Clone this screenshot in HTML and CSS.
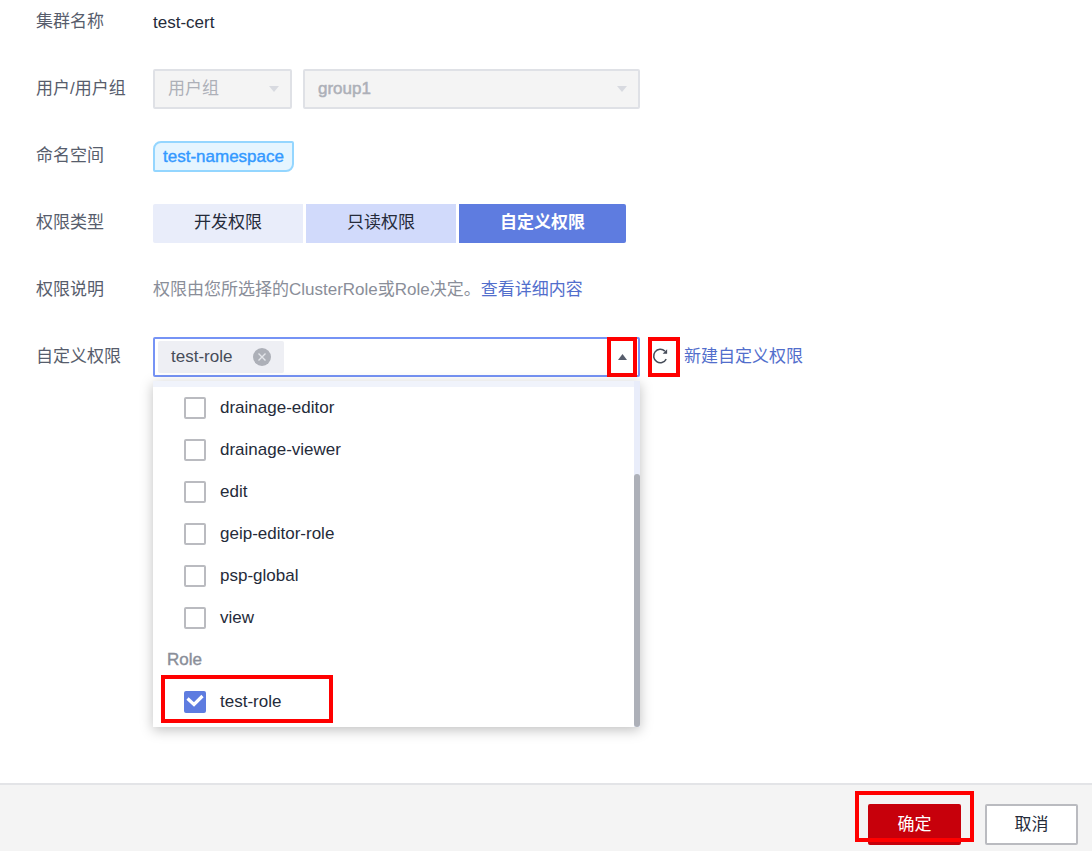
FILE: index.html
```html
<!DOCTYPE html>
<html lang="zh-CN">
<head>
    <meta charset="UTF-8">
    <meta name="viewport" content="width=device-width, initial-scale=1.0">
    <title>添加权限</title>
    <link rel="stylesheet" href="styles.css">
</head>
<body>
    <!-- Permission form -->
    <form class="form" id="permissionForm">
        <div class="form-row">
            <span class="label">集群名称</span>
            <span class="value">test-cert</span>
        </div>

        <div class="form-row">
            <label class="label" for="userType">用户/用户组</label>
            <div class="select-group">
                <div class="select select-small">
                    <select id="userType" disabled>
                        <option>用户组</option>
                    </select>
                    <svg class="select-arrow" width="10" height="6" viewBox="0 0 10 6"><path d="M0 0h10L5 6z"/></svg>
                </div>
                <div class="select select-large">
                    <select id="userGroup" class="strong" aria-label="用户组名称" disabled>
                        <option>group1</option>
                    </select>
                    <svg class="select-arrow" width="10" height="6" viewBox="0 0 10 6"><path d="M0 0h10L5 6z"/></svg>
                </div>
            </div>
        </div>

        <div class="form-row">
            <span class="label">命名空间</span>
            <span class="namespace-tag">test-namespace</span>
        </div>

        <div class="form-row">
            <span class="label">权限类型</span>
            <div class="type-buttons">
                <button type="button">开发权限</button>
                <button type="button" class="hovered">只读权限</button>
                <button type="button" class="active">自定义权限</button>
            </div>
        </div>

        <div class="form-row">
            <span class="label">权限说明</span>
            <p class="description">权限由您所选择的ClusterRole或Role决定。<a href="#">查看详细内容</a></p>
        </div>

        <div class="form-row">
            <span class="label">自定义权限</span>
            <div class="role-select">
                <div class="role-box">
                    <span class="chip">
                        test-role
                        <button type="button" class="chip-remove" aria-label="移除">
                            <svg width="18" height="18" viewBox="0 0 18 18"><circle cx="9" cy="9" r="9" fill="#adb0b8"/><path d="M5.5 5.5l7 7M12.5 5.5l-7 7" stroke="#e4e6eb" stroke-width="1.4"/></svg>
                        </button>
                    </span>
                    <button type="button" class="toggle marked" aria-label="收起">
                        <svg width="9" height="6" viewBox="0 0 9 6"><path d="M0 6h9L4.500 0z" fill="#575d6c"/></svg>
                    </button>
                </div>

                <!-- Dropdown list -->
                <div class="dropdown">
                    <div class="options">
                        <label class="option"><input type="checkbox">drainage-editor</label>
                        <label class="option"><input type="checkbox">drainage-viewer</label>
                        <label class="option"><input type="checkbox">edit</label>
                        <label class="option"><input type="checkbox">geip-editor-role</label>
                        <label class="option"><input type="checkbox">psp-global</label>
                        <label class="option"><input type="checkbox">view</label>
                        <div class="option-title">Role</div>
                        <label class="option option-marked"><input type="checkbox" checked>test-role</label>
                    </div>
                    <div class="scrollbar"><div class="thumb"></div></div>
                </div>
            </div>
            <button type="button" class="refresh marked" aria-label="刷新">
                <svg width="18" height="18" viewBox="0 0 18 18"><path d="M16 12.500A7.500 7.500 0 1 1 14.500 3.500" fill="none" stroke="#464c59" stroke-width="1.700"/><path d="M17 1.500v5h-5z" fill="#464c59"/></svg>
            </button>
            <a href="#" class="new-role">新建自定义权限</a>
        </div>
    </form>

    <!-- Footer -->
    <footer class="footer">
        <div class="confirm">
            <button type="submit" form="permissionForm" class="btn btn-primary">确定</button>
        </div>
        <button type="button" class="btn">取消</button>
    </footer>
</body>
</html>
```
FILE: styles.css
```css
*,
*::after {
    margin: 0;
    padding: 0;
    box-sizing: border-box;
}

body {
    font-family: "Liberation Sans", "Noto Sans CJK SC", sans-serif;
    font-size: 17px;
    line-height: 24px;
    color: #252b3a;
    background-color: white;
    display: flex;
    flex-direction: column;
    min-height: 100vh;
}

button,
select {
    font: inherit;
    color: inherit;
}

button {
    border: none;
    background: none;
    cursor: pointer;
}

svg {
    display: block;
}

a {
    color: #526ecc;
    text-decoration: none;
}

a:hover {
    text-decoration: underline;
}

.form {
    flex-grow: 1;
    display: flex;
    flex-direction: column;
    gap: 27px;
    padding: 2px 36px;
}

.form-row {
    display: flex;
    align-items: center;
    min-height: 40px;
}

.label {
    width: 117px;
    flex-shrink: 0;
    color: #575d6c;
}

.value {
    padding-top: 2px;
}

.select-group {
    display: flex;
    gap: 11px;
    width: 487px;
}

.select {
    display: flex;
    align-items: center;
    justify-content: flex-end;
    position: relative;
}

.select-small {
    width: 139px;
}

.select-large {
    flex-grow: 1;
}

.select select {
    appearance: none;
    width: 100%;
    height: 40px;
    padding: 0 13px;
    border: 2px solid #dfe1e6;
    border-radius: 2px;
    background-color: #f4f4f4;
    color: #adb0b8;
    opacity: 1;
}

.select .strong {
    -webkit-text-stroke: 0.5px #adb0b8;
}

.select-arrow {
    position: absolute;
    right: 13px;
    fill: #d8dae0;
    pointer-events: none;
}

.namespace-tag {
    padding: 0 8px;
    border: 2px solid #94d6ff;
    border-radius: 8px 2px;
    background-color: #e5f5ff;
    color: #3399ff;
    line-height: 27px;
    -webkit-text-stroke: 0.4px #3399ff;
}

.type-buttons {
    display: flex;
    gap: 3px;
}

.type-buttons button {
    height: 39px;
    padding: 0 41px;
    background-color: #e9edfa;
}

.type-buttons button:first-child {
    border-radius: 2px 0 0 2px;
}

.type-buttons button:last-child {
    border-radius: 0 2px 2px 0;
}

.type-buttons .hovered {
    background-color: #d1dafb;
}

.type-buttons .active {
    background-color: #5e7ce0;
    color: white;
    font-weight: bold;
}

.description {
    color: #8a8e99;
}

.role-select {
    position: relative;
    width: 487px;
}

.role-box {
    display: flex;
    align-items: center;
    justify-content: space-between;
    height: 40px;
    padding-left: 3px;
    border: 2px solid #7693f5;
    border-radius: 2px;
}

.chip {
    display: flex;
    align-items: center;
    gap: 21px;
    height: 32px;
    padding: 0 13px;
    border-radius: 2px;
    background-color: #eeeff4;
    color: #464c59;
}

.marked {
    display: flex;
    align-items: center;
    justify-content: center;
    border: 4px solid red;
}

.toggle {
    width: 30px;
    height: 40px;
    margin-right: 1px;
}

.refresh {
    width: 32px;
    height: 40px;
    margin: 0 4px 0 8px;
    padding: 0 8px 2px 0;
}

.dropdown {
    position: absolute;
    top: 44px;
    left: 0;
    right: 0;
    z-index: 1;
    display: flex;
    background-color: white;
    box-shadow: 0 3px 12px rgba(0, 0, 0, 0.25);
}

.options {
    flex-grow: 1;
    border-top: 6px solid #f0f3fb;
    padding-bottom: 4px;
}

.option,
.option-title {
    display: flex;
    align-items: center;
    height: 42px;
}

.option {
    gap: 14px;
    padding-left: 31px;
    cursor: pointer;
}

.option-title {
    padding-left: 14px;
    color: #8a8e99;
    -webkit-text-stroke: 0.4px #8a8e99;
}

.option input {
    appearance: none;
    width: 22px;
    height: 22px;
    border: 2px solid #babbc0;
    border-radius: 2px;
    background-color: white;
}

.option input:checked {
    border-color: #5e7ce0;
    background: #5e7ce0 url("data:image/svg+xml,%3Csvg xmlns='http://www.w3.org/2000/svg' viewBox='0 0 18 18'%3E%3Cpath d='M1.500 5.500l6.500 6L16.500 3' fill='none' stroke='white' stroke-width='3.200'/%3E%3C/svg%3E") center / 18px no-repeat;
}

.option-marked {
    position: relative;
}

.option-marked::after {
    content: "";
    position: absolute;
    top: -6px;
    left: 8px;
    width: 172px;
    height: 48px;
    border: 4px solid red;
}

.scrollbar {
    display: flex;
    align-items: flex-end;
    width: 6px;
    background-color: #e9edfa;
}

.thumb {
    width: 100%;
    height: 73%;
    border-radius: 3px;
    background-color: #adb0b8;
}

.footer {
    display: flex;
    justify-content: flex-end;
    gap: 24px;
    padding: 19px 14px 6px;
    border-top: 2px solid #e3e4e7;
    background-color: #f4f4f4;
}

.btn {
    min-width: 93px;
    height: 41px;
    border: 2px solid #babbc0;
    border-radius: 2px;
    background-color: white;
}

.btn-primary {
    border-color: #c7000b;
    background-color: #c7000b;
    color: white;
}

.confirm {
    position: relative;
}

.confirm::after {
    content: "";
    position: absolute;
    top: -13px;
    left: -13px;
    right: -13px;
    bottom: 3px;
    border: 4px solid red;
    pointer-events: none;
}
```
